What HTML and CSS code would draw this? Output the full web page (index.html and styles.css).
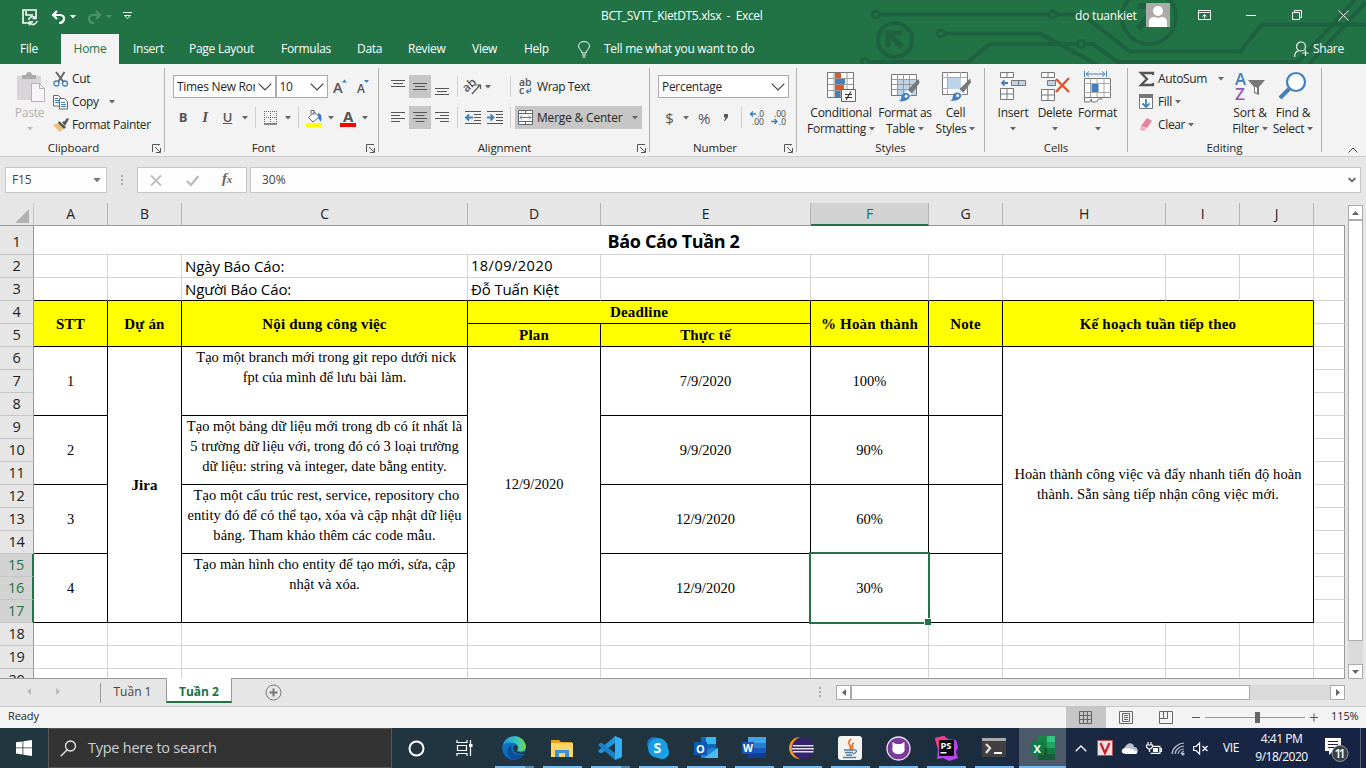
FILE: index.html
```html
<!DOCTYPE html>
<html lang="vi">
<head>
<meta charset="utf-8">
<title>BCT_SVTT_KietDT5.xlsx - Excel</title>
<link rel="stylesheet" href="styles.css">
</head>
<body>
<svg class="defs" width="0" height="0">
  <symbol id="caret" viewBox="0 0 6 4"><path d="M0 0h6L3 3.4z" fill="currentColor"/></symbol>
  <symbol id="chev" viewBox="0 0 14 8"><path d="M.7.7L7 7 13.300.7" fill="none" stroke="#444" stroke-width="1.2"/></symbol>
  <symbol id="launch" viewBox="0 0 9 9"><path d="M.5 8V.5H8M3 3l5 5M8.500 4v4.500H4" fill="none" stroke="#555"/></symbol>
  <symbol id="brush" viewBox="0 0 22 24"><path d="M21 0l1 4-8 11-4-4z" fill="#777"/><path d="M9 11l5 4-2 3-5-4z" fill="#f3f3f3"/><path d="M0 23c4-1 2-4 4-7 3-3 8-1 8 2-1 4-6 6-12 5z" fill="#4280bd"/><circle cx="8" cy="18" r="1.500" fill="#fff"/></symbol>
</svg>

<header class="top">
  <svg class="circuit" width="506" height="64" viewBox="0 0 506 64" fill="none" stroke="#1e6140" stroke-width="4">
    <circle cx="15.500" cy="14.500" r="3.500" stroke-width="3"/><path d="M19 14.500h170"/><circle cx="193" cy="14.500" r="3.500" stroke-width="3"/><path d="M197 14.500h25l48 37h110l22-27h104"/>
    <circle cx="35" cy="40" r="17"/><path d="M42 33H28v14M28 33l14 14" stroke-width="5"/>
    <circle cx="81" cy="33.500" r="3.500" stroke-width="3"/><path d="M85 33.500h95l57 31"/>
    <circle cx="5" cy="62" r="3.500" stroke-width="3"/><path d="M9 62h99l22-18h87"/><circle cx="221" cy="44" r="3.500" stroke-width="3"/><path d="M225 44h8l25 18h180L495 0M449 64L506 2"/>
    <circle cx="289" cy="17" r="27"/><path d="M278 6h20v20M298 6l-20 23" stroke-width="6"/>
  </svg>
  <div class="titlebar">
    <div class="qat">
      <svg width="16" height="16" viewBox="0 0 16 16" fill="none" stroke="#fff" stroke-width="1.600"><path d="M7 14H1V1h13v5M4 2v4h7"/><path d="M6.500 11a4 4 0 0 1 7-2m.5-3v3.500h-3.500M15 12a4 4 0 0 1-7 2m-.5 2.500V13H11" stroke-width="1.500"/></svg>
      <svg width="15" height="14" viewBox="0 0 15 14" fill="none" stroke="#fff" stroke-width="2.200"><path d="M6 1L2 5l4 4M2 5h7c6 0 5 8-1 8"/></svg>
      <svg class="qcar" width="6" height="4" color="#fff"><use href="#caret"/></svg>
      <svg class="redo" width="15" height="14" viewBox="0 0 15 14" fill="none" stroke="#4f8f6d" stroke-width="2.200"><path d="M9 1l4 4-4 4M13 5H6C0 5 1 13 7 13"/></svg>
      <svg class="qcar" width="6" height="4" color="#4f8f6d"><use href="#caret"/></svg>
      <svg class="more" width="9" height="8" viewBox="0 0 9 8" fill="none" stroke="#fff"><path d="M0 .5h9M1.500 3.500l3 3 3-3z"/></svg>
    </div>
    <div class="doc">BCT_SVTT_KietDT5.xlsx&nbsp; -&nbsp; Excel</div>
    <div class="user">do tuankiet</div>
    <svg class="avatar" width="24" height="24" viewBox="0 0 24 24"><path fill="#ababab" d="M0 0h24v24H0z"/><circle cx="12" cy="8" r="5" fill="#fff"/><path d="M3 24v-5c0-4 3-5 5-5l4 1 4-1c2 0 5 1 5 5v5z" fill="#fff"/></svg>
    <div class="winbtns">
      <svg width="14" height="11" viewBox="0 0 14 11" fill="none" stroke="#fff"><path d="M.5.5h12v9H.500zM.5 2.500h12M6.500 8.500v-4M4.500 6.500l2-2 2 2"/></svg>
      <svg width="10" height="11" viewBox="0 0 10 11"><path d="M0 5.500h10" stroke="#fff"/></svg>
      <svg width="11" height="11" viewBox="0 0 11 11" fill="none" stroke="#fff"><path d="M.5 2.500h7v7h-7zM2.500 2.500V.500h7v7h-2"/></svg>
      <svg width="11" height="11" viewBox="0 0 11 11" stroke="#fff"><path d="M.5.500l10 10M10.500.500l-10 10"/></svg>
    </div>
  </div>
  <nav class="tabs">
    <span class="t-file">File</span><span class="t-home">Home</span><span class="t-insert">Insert</span><span class="t-page">Page Layout</span><span class="t-form">Formulas</span><span class="t-data">Data</span><span class="t-rev">Review</span><span class="t-view">View</span><span class="t-help">Help</span>
    <svg width="12" height="17" viewBox="0 0 12 17" fill="none" stroke="#fff"><path d="M4 12c0-3-3.500-4-3.500-7a5.500 4.500 0 0 1 11 0c0 3-3.500 4-3.500 7zM4 14h4M4.500 16h3"/></svg>
    <span class="t-tell">Tell me what you want to do</span>
    <svg class="shareicon" width="15" height="16" viewBox="0 0 15 16" fill="none" stroke="#fff" stroke-width="1.200"><circle cx="7" cy="5.500" r="4.500"/><path d="M.5 16c0-4 2-6 5-6.500M11.500 9v6M8.500 12h6"/></svg>
    <span class="t-share">Share</span>
  </nav>
</header>

<section class="ribbon">
  <div class="group g-clip">
    <div class="gbody">
      <div class="paste">
        <svg width="30" height="32" viewBox="0 0 30 32"><path fill="#d8d4d8" d="M1 4h24v24H1z"/><path d="M6 7V3h4c0-4 6-4 6 0h4v4z" fill="#ababab"/><path d="M15.500 11.500h8l5 5V29.500h-13z" fill="#f8f2f9" stroke="#b4b0b4"/><path d="M23.500 11.500v5h5" fill="none" stroke="#b4b0b4"/></svg>
        <span>Paste</span><svg class="pc" width="6" height="4"><path d="M0 0h6L3 3.400z" fill="#bdbdbd"/></svg>
      </div>
      <div class="list3">
        <div><svg width="16" height="16" viewBox="0 0 16 16" fill="none"><path d="M3 1l7.500 10M11.500 1L5 11" stroke="#666" stroke-width="2"/><circle cx="3.500" cy="12.500" r="2.500" stroke="#4280bd" stroke-width="1.300"/><circle cx="12" cy="12.500" r="2.500" stroke="#4280bd" stroke-width="1.300"/></svg><span class="s-cut">Cut</span></div>
        <div><svg width="16" height="16" viewBox="0 0 16 16"><path d="M.5 1.500h5l2.500 2.500v8H.500z" fill="#fff" stroke="#666"/><path d="M2 4.500h3M2 6.500h4M2 8.500h4" stroke="#4280bd"/><path d="M6.500 4.500h5l3 3v7.500h-8z" fill="#fff" stroke="#666"/><path d="M8 8.500h4M8 10.500h5M8 12.500h5" stroke="#4280bd"/></svg><span>Copy</span><svg class="cc" width="6" height="4"><use href="#caret"/></svg></div>
        <div><svg width="16" height="16" viewBox="0 0 16 16"><path d="M0 8l6-2 5 5-4 4z" fill="#ebc078"/><path d="M6 4l7 6-2 2-6-6z" fill="#555"/><path d="M9 5l3-1 2-3 2 1-3 5-1 2z" fill="#555"/></svg><span class="s-fp">Format Painter</span></div>
      </div>
    </div>
    <div class="glabel">Clipboard</div><svg class="launch" width="9" height="9"><use href="#launch"/></svg>
  </div>

  <div class="group g-font">
    <div class="grow font1">
      <div class="combo"><span>Times New Roman</span><svg width="14" height="8"><use href="#chev"/></svg></div>
      <div class="combo"><span>10</span><svg width="14" height="8"><use href="#chev"/></svg></div>
      <svg width="14" height="16" viewBox="0 0 14 16"><text x="0" y="14" font-size="14.500" font-weight="600" fill="#555">A</text><path d="M9 3.500h5l-2.500-3z" fill="#4280bd"/></svg>
      <svg width="14" height="16" viewBox="0 0 14 16"><text x="1" y="14" font-size="12" font-weight="600" fill="#555">A</text><path d="M8 1h5l-2.500 3z" fill="#4280bd"/></svg>
    </div>
    <div class="grow font2">
      <b>B</b><i>I</i><u>U</u><svg width="6" height="4"><use href="#caret"/></svg><span class="sep"></span>
      <svg width="14" height="14" viewBox="0 0 14 14" stroke="#666"><path d="M.5 0v13M12.500 0v13M6.500 0v13M0 .5h14M0 6.500h14" stroke-dasharray="1 1"/><path d="M0 13h13" stroke-width="1.500"/></svg>
      <svg width="6" height="4"><use href="#caret"/></svg><span class="sep"></span>
      <svg width="16" height="18" viewBox="0 0 16 18"><path d="M2.500 8.500l6-5.500 4.500 5-6 5z" fill="#fff" stroke="#666"/><path d="M5 5V1.500h3V6" fill="none" stroke="#666"/><path d="M12 4c4 1 4 4 3 9l-3-4z" fill="#4280bd"/><path d="M0 14h16v4H0z" fill="#ff0"/></svg>
      <svg width="6" height="4"><use href="#caret"/></svg>
      <svg width="16" height="18" viewBox="0 0 16 18"><text x="3" y="13" font-size="15" font-weight="700" fill="#555">A</text><path d="M0 14h16v4H0z" fill="red"/></svg>
      <svg width="6" height="4"><use href="#caret"/></svg>
    </div>
    <div class="glabel">Font</div><svg class="launch" width="9" height="9"><use href="#launch"/></svg>
  </div>

  <div class="group g-align">
    <div class="grow al1">
      <div class="tb"><svg width="14" height="14" viewBox="0 0 14 14" stroke="#555"><path d="M0 .5h14M2 3.500h10M0 6.500h14"/></svg></div>
      <div class="tb on"><svg width="14" height="14" viewBox="0 0 14 14" stroke="#555"><path d="M0 3.500h14M2 6.500h10M0 9.500h14"/></svg></div>
      <div class="tb"><svg width="14" height="14" viewBox="0 0 14 14" stroke="#555"><path d="M0 8.500h14M2 11.500h10M0 14.500h14"/></svg></div>
      <span class="sep"></span>
      <svg width="17" height="16" viewBox="0 0 17 16"><text x="-1" y="11" font-size="12" font-weight="600" fill="#555" transform="rotate(-42 4 9)">ab</text><path d="M7 15l8-9M11 6h4.500v4" fill="none" stroke="#555" stroke-width="1.200"/></svg>
      <svg width="6" height="4"><use href="#caret"/></svg><span class="sep sep2"></span>
      <div class="wrap"><svg width="14" height="16" viewBox="0 0 14 16"><text x="0" y="7" font-size="10.500" font-weight="600" fill="#555">ab</text><text x="0" y="15" font-size="10.500" font-weight="600" fill="#555">c</text><path d="M11.500 9v3.500H8M9.500 10.500l-2 2 2 2" fill="none" stroke="#4280bd" stroke-width="1.200"/></svg><span>Wrap Text</span></div>
    </div>
    <div class="grow al2">
      <div class="tb"><svg width="14" height="14" viewBox="0 0 14 14" stroke="#555"><path d="M0 1.500h14M0 4.500h9M0 7.500h14M0 10.500h9"/></svg></div>
      <div class="tb on"><svg width="14" height="14" viewBox="0 0 14 14" stroke="#555"><path d="M0 1.500h14M2.500 4.500h9M0 7.500h14M2.500 10.500h9"/></svg></div>
      <div class="tb"><svg width="14" height="14" viewBox="0 0 14 14" stroke="#555"><path d="M0 1.500h14M5 4.500h9M0 7.500h14M5 10.500h9"/></svg></div>
      <span class="sep"></span>
      <svg width="17" height="14" viewBox="0 0 17 14" fill="none" stroke="#555"><path d="M0 .5h16M9 3.500h7M9 6.500h7M9 9.500h7M0 12.500h16"/><path d="M8 6.500H1M4 3.500l-3 3 3 3" stroke="#4280bd" stroke-width="1.800"/></svg>
      <svg width="17" height="14" viewBox="0 0 17 14" fill="none" stroke="#555"><path d="M0 .5h16M9 3.500h7M9 6.500h7M9 9.500h7M0 12.500h16"/><path d="M0 6.500h6M3.500 3.500l3 3-3 3" stroke="#4280bd" stroke-width="1.800"/></svg>
      <span class="sep"></span>
      <div class="merge"><svg width="15" height="15" viewBox="0 0 15 15"><path d="M.5.500h14v14H.500z" fill="#fff" stroke="#666"/><path d="M0 3.500h15M0 11.500h15M7.500 0v3.500M7.500 11.500V15" stroke="#666"/><path d="M2 7.500h11M4 5.500l-2 2 2 2M11 5.500l2 2-2 2" fill="none" stroke="#4280bd"/></svg><span>Merge &amp; Center</span><svg width="6" height="4"><use href="#caret"/></svg></div>
    </div>
    <div class="glabel">Alignment</div><svg class="launch" width="9" height="9"><use href="#launch"/></svg>
  </div>

  <div class="group g-num">
    <div class="grow num1"><div class="combo"><span>Percentage</span><svg width="14" height="8"><use href="#chev"/></svg></div></div>
    <div class="grow num2">
      <span class="sym">$</span><svg width="6" height="4"><use href="#caret"/></svg><span class="sym">%</span><svg width="6" height="10" viewBox="0 0 6 10"><path d="M1 1h4v3L2 8H1l1.500-3.500H1z" fill="#555"/></svg><span class="sep"></span>
      <svg width="16" height="16" viewBox="0 0 16 16"><text x="8" y="7" font-size="8.500" fill="#444" textLength="7" lengthAdjust="spacingAndGlyphs">.0</text><text x="3" y="14.500" font-size="8.500" fill="#444" textLength="12" lengthAdjust="spacingAndGlyphs">.00</text><path d="M7 4H1.500M4 1.500L1.500 4 4 6.500" fill="none" stroke="#4280bd" stroke-width="1.400"/></svg>
      <svg width="16" height="16" viewBox="0 0 16 16"><text x="3" y="7" font-size="8.500" fill="#444" textLength="12" lengthAdjust="spacingAndGlyphs">.00</text><text x="8" y="14.500" font-size="8.500" fill="#444" textLength="7" lengthAdjust="spacingAndGlyphs">.0</text><path d="M0 11.500h6M3.500 9L6 11.500 3.500 14" fill="none" stroke="#4280bd" stroke-width="1.400"/></svg>
    </div>
    <div class="glabel">Number</div><svg class="launch" width="9" height="9"><use href="#launch"/></svg>
  </div>

  <div class="group g-styles">
    <div class="bigs">
      <div class="big w66"><svg width="30" height="31" viewBox="0 0 30 31"><path d="M.5 1.500h26v25H.500z" fill="#fff" stroke="#777"/><path d="M.5 7.500h26M.5 13.500h26M.5 19.500h26M7 1.500v25M13.500 1.500v25M20 1.500v25" stroke="#999"/><path d="M8 2h6v5H8zM8 14h9v5H8z" fill="#d9592f"/><path d="M8 8h10v5H8zM8 20h5v6H8z" fill="#4280bd"/><path d="M14.500 18.500h14v12h-14z" fill="#fff" stroke="#666"/><path d="M18 23.500h7M18 26.500h7M24 20.500l-5 8.500" stroke="#333" stroke-width="1.200"/></svg><span>Conditional</span><span>Formatting <svg width="6" height="4"><use href="#caret"/></svg></span></div>
      <div class="big w56"><svg width="30" height="31" viewBox="0 0 30 31"><path d="M.5 3.500h25v21H.500z" fill="#fff" stroke="#777"/><path d="M6 9h19v15H6z" fill="#bdd3ea"/><path d="M.5 8.500h25M.5 13.500h25M.5 18.500h25M6.500 3v21M12.500 3v21M18.500 3v21" stroke="#999"/><use href="#brush" x="7" y="8" width="22" height="23"/></svg><span>Format as</span><span>Table <svg width="6" height="4"><use href="#caret"/></svg></span></div>
      <div class="big w46"><svg width="30" height="31" viewBox="0 0 30 31"><path d="M.5 1.500h25v22H.500z" fill="#fff" stroke="#777"/><path d="M.5 6.500h25M.5 17.500h25M5.500 1v22M18.500 1v22" stroke="#aaa"/><path d="M6 7h13v11H6z" fill="#bdd3ea"/><use href="#brush" x="8" y="7" width="21" height="24"/></svg><span>Cell</span><span>Styles <svg width="6" height="4"><use href="#caret"/></svg></span></div>
    </div>
    <div class="glabel">Styles</div>
  </div>

  <div class="group g-cells">
    <div class="bigs">
      <div class="big w42"><svg width="28" height="31" viewBox="0 0 28 31" fill="#fff" stroke="#777"><path d="M1.500 1.500h13v5h-13zM8 1.500v5M1.500 17.500h13v11h-13zM8 17.500v11M1.500 23h13"/><path d="M12.500 9.500h14v5h-14zM19.500 9.500v5" fill="#bdd3ea"/><path d="M9 12H3M5.500 9.500L3 12l2.500 2.500" fill="none" stroke="#4280bd" stroke-width="1.800"/></svg><span>Insert</span><svg class="bc" width="6" height="4"><use href="#caret"/></svg></div>
      <div class="big w42"><svg width="30" height="31" viewBox="0 0 30 31" fill="#fff" stroke="#777"><path d="M1.500 1.500h13v5h-13zM8 1.500v5M1.500 18.500h13v11h-13zM8 18.500v11M1.500 24h13"/><path d="M7.500 9.500h8v5h-8z" fill="#bdd3ea"/><path d="M16 8l13 13M29 7L16 21" fill="none" stroke="#d9592f" stroke-width="2.400"/></svg><span>Delete</span><svg class="bc" width="6" height="4"><use href="#caret"/></svg></div>
      <div class="big w43"><svg width="30" height="31" viewBox="0 0 30 31" fill="none"><path d="M1.500 0v6M23.500 0v6M3 3h19M6 .5L3 3l3 2.500M19 .5l3 2.500-3 2.500" stroke="#4280bd"/><path d="M1.500 7.500h26v19h-26z" fill="#fff" stroke="#777"/><path d="M7.500 7v19M14 7v19M21 7v19M1 12.500h27M1 21.500h27" stroke="#aaa"/><path d="M8.500 13h7v8h-7z" fill="#4280bd"/><path d="M1.500 26v5h5l2-3v3h5l2-3h4" stroke="#777"/></svg><span>Format</span><svg class="bc" width="6" height="4"><use href="#caret"/></svg></div>
    </div>
    <div class="glabel">Cells</div>
  </div>

  <div class="group g-edit">
    <div class="gbody">
      <div class="list3">
        <div><svg width="15" height="16" viewBox="0 0 15 16" fill="none" stroke="#555" stroke-width="2.300"><path d="M14 4V2H2l6 6-6 6h12v-2"/></svg><span>AutoSum</span><svg class="ca" width="6" height="4"><use href="#caret"/></svg></div>
        <div><svg width="15" height="16" viewBox="0 0 15 16"><path d="M.5.500h13v14H.500z" fill="#fff" stroke="#777"/><path d="M0 0h14v4H0z" fill="#777"/><path d="M7 5v8M3.500 9.500L7 13l3.500-3.500" fill="none" stroke="#4280bd" stroke-width="1.800"/></svg><span>Fill</span><svg class="cf" width="6" height="4"><use href="#caret"/></svg></div>
        <div><svg width="15" height="16" viewBox="0 0 15 16"><path d="M8 1l5 3-5 7-6-2z" fill="#e8829b"/><path d="M2 9l5 3-2 2-4-1z" fill="#f0a9b9"/></svg><span>Clear</span><svg class="cf" width="6" height="4"><use href="#caret"/></svg></div>
      </div>
      <div class="big w42 sf"><svg width="31" height="31" viewBox="0 0 31 31"><text x="0" y="14" font-size="16" font-weight="600" fill="#4280bd" textLength="11" lengthAdjust="spacingAndGlyphs">A</text><text x="0" y="28.500" font-size="16" font-weight="600" fill="#9a57b8" textLength="10" lengthAdjust="spacingAndGlyphs">Z</text><path d="M13 9h17l-6 7v8l-5-2v-6z" fill="#777"/><path d="M19 15l3 2v5l-2-1v-5z" fill="#fff"/></svg><span>Sort &amp;</span><span>Filter <svg width="6" height="4"><use href="#caret"/></svg></span></div>
      <div class="big w44"><svg width="28" height="31" viewBox="0 0 28 31"><circle cx="17" cy="11" r="9" fill="#fff" stroke="#4280bd" stroke-width="2.200"/><path d="M10 18l-9 9" stroke="#4280bd" stroke-width="4"/></svg><span>Find &amp;</span><span>Select <svg width="6" height="4"><use href="#caret"/></svg></span></div>
    </div>
    <div class="glabel">Editing</div>
  </div>
  <svg class="collapse" width="10" height="6" viewBox="0 0 10 6" fill="none" stroke="#444"><path d="M.5 5.500L5 1l4.500 4.500"/></svg>
</section>

<section class="fbar">
  <div class="namebox"><span>F15</span><svg width="8" height="5"><use href="#caret"/></svg></div>
  <svg class="dots" width="2" height="10" viewBox="0 0 2 10" fill="#aaa"><path d="M0 0h2v2H0zM0 4h2v2H0zM0 8h2v2H0z"/></svg>
  <div class="fbtns">
    <svg width="12" height="11" viewBox="0 0 12 11" stroke="#bdbdbd" stroke-width="1.800"><path d="M1 .5l10 10M11 .5l-10 10"/></svg>
    <svg width="13" height="11" viewBox="0 0 13 11" fill="none" stroke="#bdbdbd" stroke-width="2.400"><path d="M1 6l4 4 7.500-9"/></svg>
    <span class="fx">f<small>x</small></span>
  </div>
  <div class="finput"><span>30%</span><svg width="8" height="6" viewBox="0 0 8 6" fill="none" stroke="#555" stroke-width="1.700"><path d="M.7 1L4 4.300 7.300 1"/></svg></div>
</section>

<main class="work">
  <div class="sheet">
    <table>
      <colgroup><col class="c0"><col class="cA"><col class="cB"><col class="cC"><col class="cD"><col class="cE"><col class="cF"><col class="cG"><col class="cH"><col class="cI"><col class="cJ"><col class="cK"></colgroup>
      <tr class="cols"><th class="corner"><svg width="14" height="14" viewBox="0 0 14 14"><path d="M14 0v14H0z" fill="#b2b2b2"/></svg></th><th>A</th><th>B</th><th>C</th><th>D</th><th>E</th><th class="sel">F</th><th>G</th><th>H</th><th>I</th><th>J</th><th class="last"></th></tr>
      <tr class="r1"><th>1</th><td colspan="10" class="title">Báo Cáo Tuần 2</td><td class="k"></td></tr>
      <tr><th>2</th><td></td><td></td><td class="info">Ngày Báo Cáo:</td><td class="info date">18/09/2020</td><td></td><td></td><td></td><td></td><td></td><td></td><td class="k"></td></tr>
      <tr class="pre"><th>3</th><td></td><td></td><td class="info">Người Báo Cáo:</td><td class="info">Đỗ Tuấn Kiệt</td><td></td><td></td><td></td><td></td><td></td><td></td><td class="k"></td></tr>
      <tr class="hd"><th>4</th><td rowspan="2">STT</td><td rowspan="2">Dự án</td><td rowspan="2">Nội dung công việc</td><td colspan="2">Deadline</td><td rowspan="2">% Hoàn thành</td><td rowspan="2">Note</td><td rowspan="2" colspan="3">Kế hoạch tuần tiếp theo</td><td class="k"></td></tr>
      <tr class="hd"><th>5</th><td>Plan</td><td>Thực tế</td><td class="k"></td></tr>
      <tr class="bd"><th>6</th><td rowspan="3">1</td><td rowspan="12" class="jira">Jira</td><td rowspan="3" class="task">&nbsp;Tạo một branch mới trong git repo dưới nick<br>fpt của mình để lưu bài làm.</td><td rowspan="12" class="up">12/9/2020</td><td rowspan="3">7/9/2020</td><td rowspan="3">100%</td><td rowspan="3"></td><td rowspan="12" colspan="3" class="up plan">Hoàn thành công việc và đẩy nhanh tiến độ hoàn<br>thành. Sẵn sàng tiếp nhận công việc mới.</td><td class="k"></td></tr>
      <tr class="bd"><th>7</th><td class="k"></td></tr>
      <tr class="bd"><th>8</th><td class="k"></td></tr>
      <tr class="bd"><th>9</th><td rowspan="3">2</td><td rowspan="3" class="task">Tạo một bảng dữ liệu mới trong db có ít nhất là<br>5 trường dữ liệu với, trong đó có 3 loại trường<br>dữ liệu: string và integer, date bằng entity.</td><td rowspan="3">9/9/2020</td><td rowspan="3">90%</td><td rowspan="3"></td><td class="k"></td></tr>
      <tr class="bd"><th>10</th><td class="k"></td></tr>
      <tr class="bd"><th>11</th><td class="k"></td></tr>
      <tr class="bd"><th>12</th><td rowspan="3">3</td><td rowspan="3" class="task wide">&nbsp;Tạo một cấu trúc rest, service, repository cho<br>entity đó để có thể tạo, xóa và cập nhật dữ liệu<br>bảng. Tham khảo thêm các code mẫu.</td><td rowspan="3">12/9/2020</td><td rowspan="3">60%</td><td rowspan="3"></td><td class="k"></td></tr>
      <tr class="bd"><th>13</th><td class="k"></td></tr>
      <tr class="bd"><th>14</th><td class="k"></td></tr>
      <tr class="bd"><th class="sel">15</th><td rowspan="3">4</td><td rowspan="3" class="task">Tạo màn hình cho entity để tạo mới, sửa, cập<br>nhật và xóa.</td><td rowspan="3">12/9/2020</td><td rowspan="3" class="active">30%<div class="cursor"></div></td><td rowspan="3"></td><td class="k"></td></tr>
      <tr class="bd"><th class="sel">16</th><td class="k"></td></tr>
      <tr class="bd"><th class="sel">17</th><td class="k"></td></tr>
      <tr><th>18</th><td></td><td></td><td></td><td></td><td></td><td></td><td></td><td></td><td></td><td></td><td class="k"></td></tr>
      <tr><th>19</th><td></td><td></td><td></td><td></td><td></td><td></td><td></td><td></td><td></td><td></td><td class="k"></td></tr>
      <tr><th>20</th><td></td><td></td><td></td><td></td><td></td><td></td><td></td><td></td><td></td><td></td><td class="k"></td></tr>
    </table>
  </div>
  <div class="vscroll">
    <div class="sbtn"><svg width="7" height="4" viewBox="0 0 7 4"><path d="M0 4h7L3.500 0z" fill="#666"/></svg></div>
    <div class="vthumb"></div>
    <div class="sbtn down"><svg width="7" height="4" viewBox="0 0 7 4"><path d="M0 0h7L3.500 4z" fill="#666"/></svg></div>
  </div>
</main>

<footer class="sheettabs">
  <div class="nav"><svg width="4" height="7" viewBox="0 0 4 7"><path d="M4 0v7L0 3.500z" fill="#bbb"/></svg><svg width="4" height="7" viewBox="0 0 4 7"><path d="M0 0v7l4-3.500z" fill="#bbb"/></svg></div>
  <div class="stab">Tuần 1</div>
  <div class="stab cur">Tuần 2</div>
  <svg class="add" width="17" height="17" viewBox="0 0 17 17" fill="none" stroke="#777"><circle cx="8.500" cy="8.500" r="7.500"/><path d="M8.500 4.500v8M4.500 8.500h8" stroke-width="2"/></svg>
  <svg class="dots2" width="2" height="10" viewBox="0 0 2 10" fill="#aaa"><path d="M0 0h2v2H0zM0 4h2v2H0zM0 8h2v2H0z"/></svg>
  <div class="hscroll">
    <div class="sbtn"><svg width="4" height="7" viewBox="0 0 4 7"><path d="M4 0v7L0 3.500z" fill="#666"/></svg></div><div class="hthumb"></div><div class="sbtn right"><svg width="4" height="7" viewBox="0 0 4 7"><path d="M0 0v7l4-3.500z" fill="#666"/></svg></div>
  </div>
</footer>

<div class="status">
  <span class="ready">Ready</span>
  <div class="view on"><svg width="13" height="13" viewBox="0 0 13 13" fill="none" stroke="#666"><path d="M.5.500h12v12H.500zM4.500 0v13M8.500 0v13M0 4.500h13M0 8.500h13"/></svg></div>
  <div class="view"><svg width="14" height="13" viewBox="0 0 14 13" fill="none" stroke="#666"><path d="M.5.500h13v12H.500zM3.500 2.500h7v8h-7zM5 4.500h4M5 6.500h4M5 8.500h4"/></svg></div>
  <div class="view"><svg width="14" height="13" viewBox="0 0 14 13" fill="none" stroke="#666"><path d="M.5.500h13v12H.500zM.5 7.500h8V.500M4.500.500v7"/></svg></div>
  <svg class="zoomer" width="126" height="13" viewBox="0 0 126 13"><path d="M0 6.500h8M118 6.500h8M122 2.500v8" stroke="#555"/><path d="M13 6.500h100" stroke="#999"/><path d="M63 1h5v11h-5z" fill="#666"/></svg>
  <span class="pct">115%</span>
</div>

<div class="taskbar">
  <div class="start"><svg width="16" height="16" viewBox="0 0 16 16" fill="#fff"><path d="M0 2.300l6.500-.9v6.100H0zM7.300 1.300L16 0v7.500H7.300zM0 8.300h6.500v6.200L0 13.600zM7.300 8.300H16V16l-8.700-1.300z"/></svg></div>
  <div class="search"><svg width="17" height="17" viewBox="0 0 17 17" fill="none" stroke="#e8e8e8" stroke-width="1.300"><circle cx="10.500" cy="6" r="5"/><path d="M7 10L.7 16.300"/></svg><span>Type here to search</span></div>
  <div class="apps">
    <div><svg width="17" height="17" viewBox="0 0 17 17"><circle cx="8.500" cy="8.500" r="7" fill="none" stroke="#fff" stroke-width="2"/></svg></div>
    <div class="tv"><svg width="17" height="16" viewBox="0 0 17 16" fill="none" stroke="#fff" stroke-width="1.200"><path d="M1 0v2.500h10V0M1 16v-2.500h10V16M1.500 5.500h9v5h-9zM14.500 0v16"/><path d="M13 4h3.500v3H13z" fill="#fff" stroke="none"/></svg></div>
    <div class="run two"><svg width="24" height="24" viewBox="0 0 24 24"><defs><linearGradient id="eg" x1="0" x2="1"><stop offset="0" stop-color="#1b9de2"/><stop offset=".55" stop-color="#35c1c4"/><stop offset="1" stop-color="#70dc4f"/></linearGradient></defs><circle cx="12" cy="12" r="11.800" fill="#0f6fc1"/><path d="M1 9C3 3 8 0 13 .200c7 .3 11 6 11 11-.500 4-5 5-8.500 3.600 1.500-2 1-6-2.500-7.500C8 5.500 3 6.500 1 9z" fill="url(#eg)"/><path d="M10 9c-3 5 2 11 11 10-4 5-10 6-14 2-3-4-2-10 3-12z" fill="#0b4d98"/><path d="M15 9.500c1 3-.500 4.500-.500 5.500 2 2 6 2 9.500-.300L22 18c-6 1-13-3-10-8z" fill="#203640"/></svg></div>
    <div class="run"><svg width="22" height="19" viewBox="0 0 22 19"><path d="M0 1h8l2 2h11v15H0z" fill="#e7a317"/><path d="M0 4h22v14H0z" fill="#fcd668"/><path d="M4 18v-7h14v7h-4v-4H8v4z" fill="#3c91d4"/></svg></div>
    <div class="run two"><svg width="24" height="24" viewBox="0 0 24 24"><path d="M17 0v7L4 17H2l-2-2z" fill="#2493d8"/><path d="M2 7h2l13 10v7L0 9z" fill="#1780c6"/><path d="M17 0l7 3v18l-7 3z" fill="#35aff4"/></svg></div>
    <div class="run"><svg width="22" height="22" viewBox="0 0 22 22"><circle cx="7" cy="7" r="7" fill="#1474c9"/><circle cx="15" cy="15" r="7" fill="#1aa8e7"/><circle cx="11" cy="11" r="10" fill="#189fe5"/><text x="6.500" y="16" font-size="14" font-weight="700" fill="#fff">S</text></svg></div>
    <div class="run"><svg width="24" height="22" viewBox="0 0 24 22"><path d="M7 0h15v17H7z" fill="#0f66b8"/><path d="M12 0h10v7H12z" fill="#35b8f1"/><path d="M7 12l17-1v10H7z" fill="#1d83d1"/><path d="M24 11L10 21h14z" fill="#50b9f1"/><path d="M0 5h13v13H0z" fill="#0a5ab1"/><text x="2" y="15.500" font-size="11" font-weight="700" fill="#fff">O</text></svg></div>
    <div class="run"><svg width="24" height="22" viewBox="0 0 24 22"><path d="M6 0h18v6H6z" fill="#41a5ee"/><path d="M6 6h18v5H6z" fill="#2b7cd3"/><path d="M6 11h18v5H6z" fill="#185abd"/><path d="M6 16h18v5H6z" fill="#103f91"/><path d="M0 5h12v12H0z" fill="#1956b5"/><text x="1" y="15" font-size="11" font-weight="700" fill="#fff" textLength="10" lengthAdjust="spacingAndGlyphs">W</text></svg></div>
    <div class="run"><svg width="24" height="24" viewBox="0 0 24 24"><path d="M10 1a11 11 0 0 0 0 22A16 16 0 0 1 10 1z" fill="#f7941e"/><circle cx="13" cy="12" r="11" fill="#35246b"/><path d="M3 9h20.500v1.500H3zM2 12h22v1.500H2zM3 15h20.500v1.500H3z" fill="#e5e2ef"/></svg></div>
    <div class="run"><svg width="24" height="24" viewBox="0 0 24 24"><rect width="24" height="24" rx="3" fill="#f2f2f0"/><path d="M13 3c-6 5 2 6-1 11M16 7c-4 2 0 3-2 6" fill="none" stroke="#e76f27" stroke-width="1.700"/><path d="M6 14h10M7 16.500h8M8 19h6M5 21.500h13M16 14c4-.5 3 3-1 4" fill="none" stroke="#557f9f" stroke-width="1.300"/></svg></div>
    <div class="run"><svg width="25" height="25" viewBox="0 0 25 25"><circle cx="12.500" cy="12.500" r="11.500" fill="#7a3b9c" stroke="#efe8f4" stroke-width="1.300"/><path d="M6.500 6l3.500 2h5l3.500-2v6c2 8-14 8-12 0z" fill="#fff"/></svg></div>
    <div class="run"><svg width="25" height="25" viewBox="0 0 25 25"><path d="M1 2l9-2 4 3 8 1 2 7-2 5 2 6-9 3-6-3-6 1 1-9z" fill="#b845e8"/><path d="M1 2l9-2 3 3-9 10z" fill="#f43d86"/><path d="M5 4h15v16H5z" fill="#080808"/><text x="6.500" y="13" font-size="9" font-weight="700" fill="#fff" textLength="11" lengthAdjust="spacingAndGlyphs">PS</text><path d="M6.500 16h6v1.500h-6z" fill="#fff"/></svg></div>
    <div class="run"><svg width="24" height="20" viewBox="0 0 24 20"><path d="M0 0h24v19H0z" fill="#404040"/><path d="M0 0h24v3H0z" fill="#aaa"/><path d="M4 6l4 4-4 5" fill="none" stroke="#ddd" stroke-width="2.400"/><path d="M12 15h8" stroke="#fff" stroke-width="2"/></svg></div>
    <div class="run act"><svg width="24" height="24" viewBox="0 0 24 24"><path d="M7 0h9v24H7z" fill="#168447"/><path d="M16 0h8v6h-8z" fill="#33c481"/><path d="M16 6h8v6h-8z" fill="#21a366"/><path d="M7 12h17v12H7z" fill="#185c37"/><path d="M16 12h8v6h-8z" fill="#107c41"/><path d="M0 6h13v13H0z" fill="#107c41"/><text x="2.500" y="16.500" font-size="11" font-weight="700" fill="#fff">X</text></svg></div>
  </div>
  <div class="tray">
    <svg width="12" height="7" viewBox="0 0 12 7" fill="none" stroke="#fff" stroke-width="1.300"><path d="M.7 6.300L6 1l5.300 5.300"/></svg>
    <svg width="17" height="17" viewBox="0 0 17 17"><path d="M.5.500h15v15H.500z" fill="#f5dede" stroke="#b55"/><path d="M3.500 3L8 13l4.500-10" fill="none" stroke="#c8202a" stroke-width="2.200"/></svg>
    <svg width="17" height="11" viewBox="0 0 17 11"><path d="M4 10a4 4 0 0 1 0-6c3-6 9-4 9 0 5 0 5 7 0 7H4z" fill="#b9bfc9"/><path d="M2 10.500c-3-3 0-6 3-5 4-1 6 1 11 3 1 2-1 2.500-2 2.500z" fill="#fff"/></svg>
    <svg width="16" height="12" viewBox="0 0 16 12" fill="none" stroke="#fff" stroke-width="1.200"><path d="M4.500 11.400h9.400v-7H7M13.900 6.500h1.500v3h-1.500"/><path d="M2 0v3M5 0v3M.5 3h6v2l-2 2h-2l-2-2zM3.500 7v3"/><path d="M7 6h5v4H7z" fill="#fff" stroke="none"/></svg>
    <svg width="14" height="13" viewBox="0 0 14 13" fill="none" stroke="#b9c0ca" stroke-width="1.200"><path d="M1 12A13 12 0 0 1 13 1M4 12a10 9 0 0 1 9-8M7 12a6 6 0 0 1 6-5M10 12a4 4 0 0 1 3-3"/><circle cx="12" cy="12" r="1" fill="#fff"/></svg>
    <svg width="16" height="13" viewBox="0 0 16 13" fill="none" stroke="#fff" stroke-width="1.200"><path d="M.6 4.500h2.500l3.500-3.500v11L3.100 8.500H.600zM9.500 4l5 5M14.500 4l-5 5"/></svg>
    <span class="vie">VIE</span>
    <div class="clock"><span>4:41 PM</span><span>9/18/2020</span></div>
    <svg class="notif" width="26" height="26" viewBox="0 0 26 26"><path d="M1 2h16v13H9l-4 4v-4H1z" fill="#fff"/><path d="M4 5.500h10M4 8.500h10M4 11.500h7" stroke="#1b2743"/><circle cx="16" cy="17.500" r="8" fill="#3a3f49" stroke="#999"/><text x="10.500" y="22" font-size="12" font-weight="600" fill="#fff" textLength="11">11</text></svg>
    <span class="peek"></span>
  </div>
</div>
</body>
</html>
```
FILE: styles.css
```css
* { box-sizing: border-box; }
body {
  margin: 0; width: 1366px; height: 768px; overflow: hidden;
  display: flex; flex-direction: column;
  font: 12px/16px "Open Sans", "Noto Sans", sans-serif;
  letter-spacing: -0.2px; color: #262626; background: #e6e6e6;
}
svg { display: block; flex: none; overflow: visible; }
svg text { letter-spacing: 0; }
.defs { position: absolute; }
span { white-space: nowrap; }

.top { height: 64px; background: #217346; color: #fff; position: relative; flex: none; }
.circuit { position: absolute; right: 0; top: 0; overflow: hidden; }
.titlebar { position: relative; display: flex; align-items: center; height: 32px; }
.qat { display: flex; align-items: center; width: 601px; padding-left: 22px; padding-top: 2px; }
.qat svg:nth-child(2) { margin-left: 13px; }
.qcar { margin-left: 4px; }
.redo { margin-left: 11px; }
.qat .more { margin-left: 11px; margin-bottom: 2px; }
.doc { width: 474px; letter-spacing: -0.35px; white-space: nowrap; }
.user { width: 71px; white-space: nowrap; }
.avatar { margin-bottom: 2px; }
.winbtns { display: grid; grid-template-columns: 46px 46px 46px 46px; justify-items: center; align-items: center; margin-left: 12px; padding-bottom: 1px; }
.tabs { position: relative; display: flex; align-items: center; height: 32px; padding-top: 2px; letter-spacing: -0.27px; }
.tabs span { flex: none; line-height: 30px; }
.t-file { width: 61px; padding-left: 20px; }
.tabs .t-home { width: 58px; text-align: center; background: #f3f3f3; color: #217346; }
.t-insert { width: 70px; padding-left: 14px; }
.t-page { width: 92px; }
.t-form { width: 76px; }
.t-data { width: 51px; }
.t-rev { width: 64px; }
.t-view { width: 52px; }
.t-help { width: 54px; }
.t-tell { margin-left: 14px; width: 690px; }
.t-share { margin-left: 4px; }

.ribbon { display: flex; flex: none; height: 93px; background: #f3f3f3; border-bottom: 1px solid #cdcdcd; padding-top: 4px; }
.group { position: relative; height: 84px; border-right: 1px solid #b1b1b1; display: flex; flex-direction: column; color: #262626; }
.ribbon svg { color: #666; }
.g-clip { width: 165px; }
.g-font { width: 214px; padding-left: 7px; }
.g-align { width: 271px; padding-left: 8px; }
.g-num { width: 147px; padding-left: 8px; }
.g-styles { width: 188px; padding-left: 8px; }
.g-cells { width: 143px; padding-left: 7px; }
.g-edit { width: 194px; padding-left: 11px; }
.glabel { margin-top: auto; margin-bottom: -2px; height: 12px; padding-right: 18px; font-size: 11.500px; letter-spacing: -0.1px; display: flex; align-items: center; justify-content: center; }
.g-clip .glabel { padding-right: 17px; }
.g-font .glabel { padding-right: 31px; padding-left: 8px; }
.g-align .glabel { padding-right: 27px; }
.g-num .glabel { padding-right: 24px; }
.g-styles .glabel { padding-right: 8px; }
.g-cells .glabel { padding-right: 7px; }
.g-edit .glabel { padding-right: 11px; }
.launch { position: absolute; right: 3px; bottom: -1px; }
.gbody { display: flex; }
.g-clip .gbody { padding-left: 6px; }
.paste { width: 47px; display: flex; flex-direction: column; align-items: center; color: #b0b0b0; padding-top: 4px; }
.paste span { margin-top: 1px; margin-bottom: 6px; }
.paste svg:first-child { margin-left: 3px; }
.list3 { margin-top: -1px; }
.list3 > div { height: 23px; display: flex; align-items: center; gap: 3px; letter-spacing: -0.35px; }
.list3 .cc { margin-left: 7px; }
.list3 .ca { margin-left: 7px; }
.g-edit .list3 { width: 91px; }
.g-edit .list3 > div { gap: 4px; }
.g-edit .cf { margin-left: -1px; }
.sf { margin-left: -1px; }
.grow { display: grid; align-items: center; justify-items: center; height: 23px; margin-top: 7px; }
.grow + .grow { margin-top: 8px; }
.font1 { grid-template-columns: 103px 52px 24px 22px; justify-content: start; margin-left: 1px; }
.font2 { grid-template-columns: 22px 22px 23px 12px 8px 23px 12px 8px 24px 10px 24px 10px; justify-content: start; color: #555; font-size: 13px; line-height: 14px; }
.font2 b, .font2 i, .font2 u { margin-top: -2px; }
.font2 i { font-weight: 600; font-family: "Liberation Serif", serif; font-size: 15px; }
.font2 u { font-weight: 600; }
.al1 { grid-template-columns: 22px 22px 22px 9px 22px 8px 35px 1fr; justify-content: start; }
.al1 .sep2 { margin-left: 1px; }
.al2 { grid-template-columns: 22px 22px 22px 9px 22px 22px 9px 1fr; }
.num1 { justify-items: start; }
.num2 { grid-template-columns: 23px 10px 26px 18px 13px 17px 27px; justify-content: start; }
.sym { font-size: 15px; color: #555; }
.sep { width: 1px; height: 21px; background: #d0d0d0; }
.combo { width: 100%; height: 23px; border: 1px solid #ababab; background: #fff; display: flex; align-items: center; justify-content: space-between; padding: 0 3px; overflow: hidden; }
.combo + .combo { margin-left: -1px; }
.combo span { overflow: hidden; max-width: 78px; letter-spacing: -0.3px; }
.num1 .combo { width: 131px; }
.tb { width: 22px; height: 23px; display: flex; align-items: center; justify-content: center; }
.on { background: #c6c6c6; }
.wrap { display: flex; gap: 4px; justify-self: start; margin-left: -8px; letter-spacing: -0.45px; }
.merge { width: 127px; height: 23px; background: #c6c6c6; display: flex; align-items: center; gap: 4px; padding-left: 3px; justify-self: start; }
.merge span { width: 91px; }
.bigs { display: flex; }
.big { display: flex; flex-direction: column; align-items: center; padding-top: 3px; line-height: 16px; letter-spacing: -0.25px; }
.big > svg:first-child { margin-bottom: 3px; }
.g-styles .big > svg:first-child { margin-left: 2px; }
.big span { display: flex; align-items: center; gap: 3px; }
.w66 { width: 72px; } .w56 { width: 56px; } .w46 { width: 45px; } .w42 { width: 42px; } .w43 { width: 43px; } .w44 { width: 44px; }
.bc { margin-top: 6px; }
.collapse { margin: 79px 0 0 26px; }

.fbar { flex: none; height: 46px; padding: 10px 5px 0; display: flex; align-items: flex-start; }
.namebox { width: 102px; height: 26px; background: #fdfdfd; border: 1px solid #c6c6c6; display: flex; justify-content: space-between; align-items: center; padding: 0 5px 0 6px; color: #444; }
.namebox svg { color: #777; }
.dots { margin: 8px 14px 0 14px; }
.fbtns { width: 110px; height: 26px; background: #fdfdfd; border: 1px solid #c6c6c6; display: flex; align-items: center; padding-left: 12px; }
.fbtns svg + svg { margin-left: 24px; }
.fx { margin-left: 23px; margin-top: -3px; font: italic bold 15px "Liberation Serif", serif; color: #666; }
.fx small { font-size: 11px; }
.finput { margin-left: 3px; width: 1111px; height: 26px; background: #fdfdfd; border: 1px solid #c6c6c6; display: flex; justify-content: space-between; align-items: center; padding: 0 4px 0 11px; color: #444; letter-spacing: 0; }

.work { display: flex; flex: none; height: 476px; }
.sheet { width: 1345px; height: 476px; overflow: hidden; border-bottom: 1px solid #999; flex: none; }
table { table-layout: fixed; width: 1345px; border-collapse: separate; border-spacing: 0; background: #fff; }
.c0 { width: 34px; } .cA, .cB, .cG, .cI, .cJ { width: 74px; } .cC { width: 286px; } .cD { width: 133px; } .cE { width: 210px; } .cF { width: 118px; } .cH { width: 163px; } .cK { width: 31px; }
tr { height: 23px; }
.r1 { height: 29px; }
th, td { padding: 0; line-height: 20px; white-space: nowrap; }
th { background: #e6e6e6; font-weight: 400; font-size: 14.500px; color: #222; border-right: 1px solid #999; border-bottom: 1px solid #c4c4c4; }
.r1 th { padding-top: 4px; }
.cols th { border-bottom: 1px solid #999; border-right: 1px solid #b4b4b4; font-size: 14px; line-height: 18px; }
.cols .last { border-right: 0; }
.cols .corner { border-right-color: #c4c4c4; }
.corner svg { margin: 4px 0 0 15px; }
th.sel { background: #d3d3d3; color: #217346; border-right: 2px solid #217346; }
.cols th.sel { border-bottom: 2px solid #217346; border-right: 1px solid #b4b4b4; }
td { border-right: 1px solid #d4d4d4; border-bottom: 1px solid #d4d4d4; text-align: center; color: #000; }
td.k, .hd .k, .bd .k { border-right: 1px solid #999; border-bottom: 1px solid #d4d4d4; background: #fff; }
.title { font: 700 18px/22px "Open Sans", "Noto Sans", sans-serif; letter-spacing: -0.35px; padding-top: 2px; }
.info { text-align: left; padding-left: 3px; font-size: 15px; letter-spacing: -0.13px; padding-bottom: 1px; }
.date { letter-spacing: 0.5px; font-size: 14.500px; }
.pre td:not(.k) { border-bottom-color: #000; }
.hd td, .bd td { border-color: #000; font-family: "Liberation Serif", serif; font-size: 15px; letter-spacing: 0; }
.hd td { background: #ff0; font-weight: 700; letter-spacing: 0.17px; }
.bd td { font-size: 14.500px; }
.bd .up { padding-bottom: 1px; }
.bd .plan { letter-spacing: 0.09px; }
.bd .wide { letter-spacing: 0.08px; }
.bd .jira { font-weight: 700; font-size: 15px; }
.bd .task { vertical-align: top; }
.active { position: relative; }
.cursor { position: absolute; left: -2px; top: -2px; right: -2px; bottom: -2px; border: 2px solid #217346; }
.cursor::after { content: ""; position: absolute; right: -3px; bottom: -3px; width: 6px; height: 6px; background: #217346; border: solid #fff; border-width: 1px 0 0 1px; }
.vscroll { width: 15px; margin: 2px 0 0 3px; height: 474px; background: #dadada; display: flex; flex-direction: column; }
.sbtn { width: 15px; height: 15px; background: #fff; border: 1px solid #ababab; display: flex; align-items: center; justify-content: center; flex: none; }
.vthumb { height: 421px; background: #fff; border: 1px solid #ababab; }
.down, .right { margin-top: auto; }

.sheettabs { flex: none; height: 27px; display: flex; align-items: flex-start; color: #444; }
.nav { width: 101px; height: 20px; margin-top: 4px; border-right: 1px solid #999; padding: 5px 0 0 27px; display: flex; gap: 25px; }
.stab { width: 65px; text-align: center; line-height: 26px; padding-right: 2px; letter-spacing: 0; }
.cur { width: 66px; height: 25px; margin-top: -1px; background: #fff; color: #217346; font-weight: 700; border: 1px solid #999; border-top: 0; border-bottom: 2px solid #217346; position: relative; line-height: 27px; padding: 0; }
.add { margin: 5px 0 0 33px; }
.dots2 { margin: 8px 0 0 537px; }
.hscroll { margin: 6px 0 0 15px; width: 509px; height: 15px; background: #dadada; display: flex; }
.hthumb { width: 399px; height: 15px; background: #fff; border: 1px solid #ababab; }
.right { margin: 0 0 0 auto; }

.status { flex: none; height: 22px; background: #f3f3f3; border-top: 1px solid #c6c6c6; display: flex; align-items: center; font-size: 11px; letter-spacing: -0.1px; }
.ready { width: 1058px; margin-left: 8px; padding-bottom: 3px; }
.view { width: 40px; height: 21px; display: flex; align-items: center; justify-content: center; padding-right: 1px; }
.zoomer { margin-left: 6px; }
.pct { margin-left: 13px; padding-bottom: 3px; }

.taskbar { flex: none; height: 40px; display: flex; background: linear-gradient(90deg, #213840, #20333f 60%, #192742 82%, #172344); color: #fff; }
.start { width: 48px; flex: none; display: flex; align-items: center; justify-content: center; }
.search { width: 344px; flex: none; background: #333; border: 1px solid #555; display: flex; align-items: center; gap: 11px; padding-left: 11px; color: #d0d0d0; font-size: 14.500px; letter-spacing: -0.25px; }
.apps { flex: none; display: grid; grid-template-columns: 48px 50px repeat(11, 48px) 48px; width: 674px; }
.apps > div { display: flex; align-items: center; justify-content: center; height: 40px; }
.apps .tv { padding-right: 2px; }
.apps .run { position: relative; }
.run::after { content: ""; position: absolute; left: 5px; bottom: 0; width: 39px; height: 2px; background: #76b9ed; }
.apps .two::after { background: linear-gradient(90deg, #76b9ed 78%, #5a87ab 78%); }
.act { background: #4b5969; margin-left: 1px; }
.act::after { left: 0; width: 47px; }
.tray { flex: none; display: grid; grid-template-columns: 24px 25px 23px 26px 22px 24px 36px 64px 42px 11px; align-items: center; justify-items: center; margin-left: 3px; }
.clock { display: flex; flex-direction: column; align-items: center; line-height: 18px; letter-spacing: -0.5px; padding-left: 1px; }
.notif { margin-left: 6px; margin-top: 2px; }
.vie { letter-spacing: -0.4px; }
.peek { width: 1px; height: 40px; background: #5b6478; }
```
